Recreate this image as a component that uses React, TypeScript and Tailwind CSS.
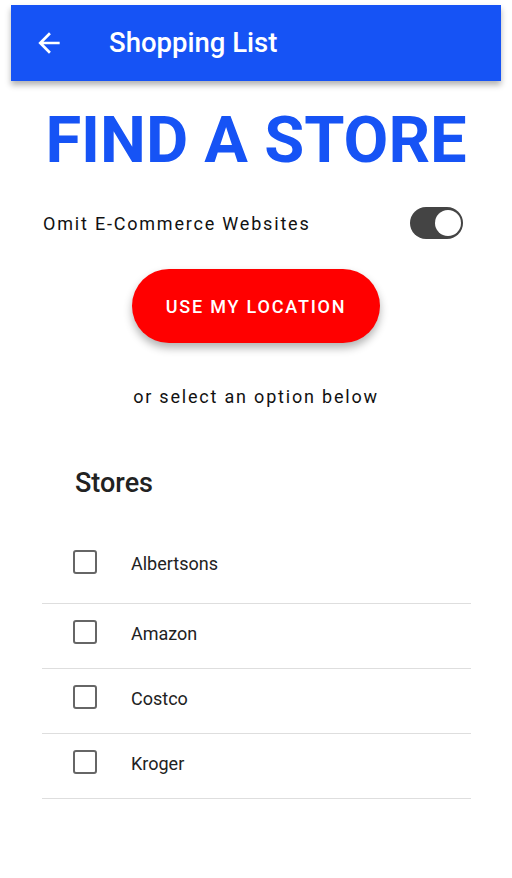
import { useState } from 'react'

const STORES = ['Albertsons', 'Amazon', 'Costco', 'Kroger']

function App() {
  const [omit, setOmit] = useState(true)
  const [checked, setChecked] = useState<Record<string, boolean>>({})

  function toggleStore(name: string) {
    setChecked({ ...checked, [name]: !checked[name] })
  }

  return (
    <div className="min-h-screen bg-white font-['Roboto',sans-serif] pt-[5px]">
      {/* App bar */}
      <header className="mx-[11px] h-[76px] bg-[#1653f5] flex items-center shadow-[0_4px_6px_rgba(0,0,0,0.3)]">
        <button className="ml-[22px] w-8 h-8 flex items-center justify-center text-white">
          <svg width="32" height="32" viewBox="0 0 24 24" fill="currentColor">
            <path d="M20 11H7.83l5.59-5.59L12 4l-8 8 8 8 1.41-1.41L7.83 13H20v-2z" />
          </svg>
        </button>
        <h1 className="ml-[44px] text-[27.5px] font-medium text-white leading-none">Shopping List</h1>
      </header>

      <h2 className="mt-[27px] text-center text-[65px] leading-none font-bold text-[#1653f5]">FIND A STORE</h2>

      {/* Omit toggle */}
      <div className="mt-[34px] ml-[43px] mr-[49px] flex items-center justify-between">
        <span className="text-[18px] tracking-[0.1em] text-[#111]">Omit E-Commerce Websites</span>
        <button
          onClick={() => setOmit(!omit)}
          className={`relative w-[53px] h-[32px] rounded-full ${omit ? 'bg-[#444]' : 'bg-[#bbb]'}`}
        >
          <span className={`absolute top-[3px] w-[26px] h-[26px] rounded-full bg-white ${omit ? 'right-[2px]' : 'left-[2px]'}`} />
        </button>
      </div>

      <div className="mt-[30px] flex justify-center">
        <button className="w-[248px] h-[74px] rounded-full bg-[#ff0000] text-white text-[18px] font-medium tracking-[0.1em] shadow-[0_5px_8px_rgba(0,0,0,0.3)]">
          USE MY LOCATION
        </button>
      </div>

      <p className="mt-[40px] text-center text-[18px] leading-[27px] tracking-[0.1em] text-[#111]">or select an option below</p>

      {/* Stores */}
      <h3 className="mt-[60px] ml-[75px] text-[27px] leading-none font-medium text-[#222]">Stores</h3>

      <ul className="mt-[37px] mx-[42px] w-[429px]">
        {STORES.map((name, i) => (
          <li
            key={name}
            onClick={() => toggleStore(name)}
            className={`flex items-center border-b border-[#dedede] pt-4 ${i === 0 ? 'pb-[29px]' : 'pb-[24px]'}`}
          >
            <span className="ml-[31px] w-6 h-6 rounded-[3px] border-2 border-[#666] flex items-center justify-center">
              {checked[name] && <span className="w-3 h-3 bg-[#666]" />}
            </span>
            <span className="ml-[34px] text-[18px] leading-6 text-[#222] translate-y-[2px]">{name}</span>
          </li>
        ))}
      </ul>
    </div>
  )
}

export default App
